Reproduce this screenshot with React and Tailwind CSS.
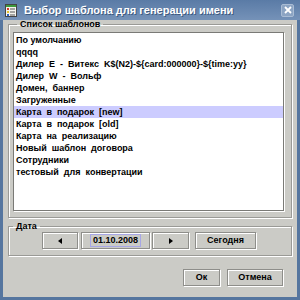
import React from "react";

const items = [
  "По умолчанию",
  "qqqq",
  "Дилер  E  -  Витекс  K$(N2)-${card:000000}-${time:yy}",
  "Дилер  W  -  Вольф",
  "Домен,  баннер",
  "Загруженные",
  "Карта  в  подарок  [new]",
  "Карта  в  подарок  [old]",
  "Карта  на  реализацию",
  "Новый  шаблон  договора",
  "Сотрудники",
  "тестовый  для  конвертации",
];

const btn =
  "h-[17px] flex items-center justify-center bg-[#cbcbc6] border border-[#8e8e8a] shadow-[inset_1px_1px_0_#fff,1px_1px_0_#fff] text-[9px] font-bold text-black";

function AppIcon() {
  return (
    <svg width="12" height="13" viewBox="0 0 12 13">
      <rect x="0.5" y="0.5" width="11" height="12" fill="#f4f4ee" stroke="#444" />
      <rect x="1" y="1" width="10" height="2" fill="#3c9a3c" />
      <rect x="2" y="4" width="2" height="2" fill="#d23b2b" />
      <rect x="2" y="7" width="2" height="2" fill="#e2c12a" />
      <rect x="2" y="10" width="2" height="2" fill="#2f62c0" />
      <rect x="5" y="4.5" width="5" height="1" fill="#555" />
      <rect x="5" y="7.5" width="5" height="1" fill="#555" />
      <rect x="5" y="10.5" width="5" height="1" fill="#555" />
    </svg>
  );
}

export default function App() {
  return (
    <div
      className="w-[300px] h-[300px] bg-[#56769f] flex flex-col overflow-hidden"
      style={{ fontFamily: '"Liberation Sans", Arial, sans-serif' }}
    >
      {/* Title bar */}
      <div className="h-[20px] shrink-0 flex items-center pl-[5px] bg-gradient-to-b from-[#5a7ba6] to-[#7592b8]">
        <AppIcon />
        <span className="ml-[7px] text-white font-bold text-[11px] [text-shadow:1px_1px_0_#3d5a80]">
          Выбор шаблона для генерации имени
        </span>
        <div className="ml-auto mr-[6px] w-[13px] h-[13px] rounded-[2px] bg-[#8ca4c3] border border-[#a9bcd4] flex items-center justify-center">
          <svg width="8" height="8" viewBox="0 0 8 8">
            <path d="M1 1 L7 7 M7 1 L1 7" stroke="#fff" strokeWidth="1.8" />
          </svg>
        </div>
      </div>

      {/* Body */}
      <div className="flex-1 mx-[3px] mb-[3px] bg-[#cbcbc6] flex flex-col px-[5px]">
        <fieldset className="border border-[#9a9a96] shadow-[inset_1px_1px_0_#fff,1px_1px_0_#fff] pl-[4px] pr-[7px] pb-[6px] pt-[3px]">
          <legend className="ml-[4px] px-[3px] text-[9px] leading-[9px] font-bold text-black">
            Список шаблонов
          </legend>
          <div className="h-[179px] bg-white border border-[#7a7a76] shadow-[1px_1px_0_#fff] pt-[1px]">
            {items.map((t, i) => (
              <div
                key={i}
                className={`h-[12px] leading-[12px] pl-[2px] text-[9px] font-bold text-black whitespace-pre ${
                  i === 6 ? "bg-[#ccccff]" : ""
                }`}
              >
                {t}
              </div>
            ))}
          </div>
        </fieldset>

        <fieldset className="mt-[4px] border border-[#9a9a96] shadow-[inset_1px_1px_0_#fff,1px_1px_0_#fff] pb-[6px] pt-[1px]">
          <legend className="ml-[4px] px-[3px] text-[9px] leading-[9px] font-bold text-black">
            Дата
          </legend>
          <div className="flex justify-center pr-[2px]">
            <div className={`${btn} w-[36px]`}>
              <svg width="4" height="6" viewBox="0 0 4 6">
                <path d="M4 0 L0 3 L4 6 Z" fill="#000" />
              </svg>
            </div>
            <div className={`${btn} w-[69px] ml-[3px]`}>
              <span className="border border-[#a6a6e6] px-[2px] leading-[11px]">01.10.2008</span>
            </div>
            <div className={`${btn} w-[37px] ml-[2px]`}>
              <svg width="4" height="6" viewBox="0 0 4 6">
                <path d="M0 0 L4 3 L0 6 Z" fill="#000" />
              </svg>
            </div>
            <div className={`${btn} w-[61px] ml-[6px]`}>Сегодня</div>
          </div>
        </fieldset>

        <div className="mt-[13px] flex justify-end pr-[9px]">
          <div className={`${btn} w-[37px]`}>Ок</div>
          <div className={`${btn} w-[56px] ml-[7px]`}>Отмена</div>
        </div>
      </div>
    </div>
  );
}
